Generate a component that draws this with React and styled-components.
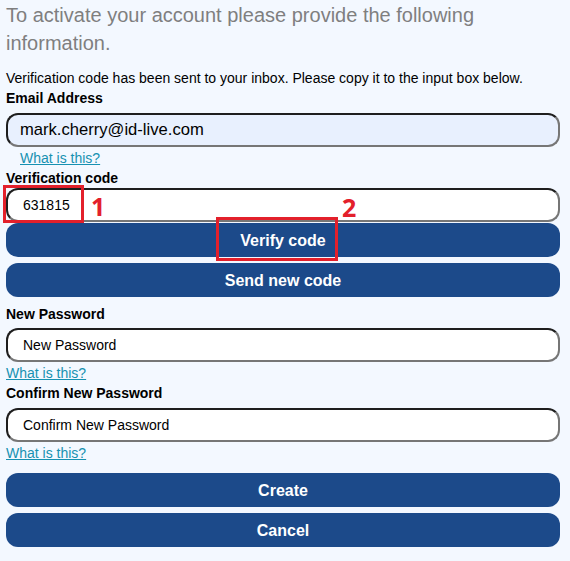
import React from "react";
import styled, { createGlobalStyle } from "styled-components";

const Global = createGlobalStyle`
  html, body { margin: 0; padding: 0; background: #f3f8ff; }
  body { font-family: "Liberation Sans", Arial, sans-serif; }
`;

const Page = styled.div`
  position: relative;
  width: 570px;
  min-height: 561px;
  box-sizing: border-box;
  padding: 1px 10px 0 6px;
  background: #f3f8ff;
`;

const Heading = styled.h1`
  margin: 0;
  font-size: 20px;
  line-height: 28px;
  font-weight: 400;
  color: #7f7f7f;
`;

const Intro = styled.p`
  margin: 11px 0 0;
  font-size: 14px;
  line-height: 20px;
  color: #000;
`;

const Label = styled.label`
  display: block;
  margin-top: ${(p) => p.$mt || 0}px;
  font-size: 14px;
  line-height: 20px;
  font-weight: 700;
  color: #000;
`;

const Input = styled.input`
  display: block;
  box-sizing: border-box;
  width: 100%;
  height: 34px;
  margin: ${(p) => p.$mt || 0}px 0 0;
  padding: 0 0 0 ${(p) => p.$pl || 15}px;
  border: 2px solid;
  border-color: #1e1e1e #767676 #767676 #1e1e1e;
  border-radius: 12px;
  background: ${(p) => (p.$filled ? "#e8f0fe" : "#fff")};
  font-family: "Liberation Sans", Arial, sans-serif;
  font-size: ${(p) => p.$fs || 14}px;
  color: #000;
  outline: none;
  &::placeholder { color: #000; opacity: 1; }
`;

const Help = styled.a`
  display: block;
  width: max-content;
  margin: 1px 0 0 ${(p) => p.$indent || 0}px;
  font-size: 14px;
  line-height: 20px;
  color: #1791b1;
  text-decoration: underline;
  cursor: pointer;
`;

const Button = styled.button`
  display: block;
  box-sizing: border-box;
  width: 100%;
  height: 34px;
  margin-top: ${(p) => p.$mt || 0}px;
  padding: 2px 0 0;
  border: none;
  border-radius: 12px;
  background: #1c4a8a;
  color: #fff;
  font-family: "Liberation Sans", Arial, sans-serif;
  font-size: 16px;
  font-weight: 700;
  cursor: pointer;
`;

const Mark = styled.div`
  position: absolute;
  left: ${(p) => p.$x}px;
  top: ${(p) => p.$y}px;
  width: ${(p) => p.$w}px;
  height: ${(p) => p.$h}px;
  box-sizing: border-box;
  border: 3px solid #e3202b;
  pointer-events: none;
`;

const Num = styled.span`
  position: absolute;
  left: ${(p) => p.$x}px;
  top: ${(p) => p.$y}px;
  font-family: "Open Sans", "Liberation Sans", sans-serif;
  font-size: 25px;
  line-height: 25px;
  font-weight: 700;
  color: #e3202b;
`;

export default function App() {
  return (
    <>
      <Global />
      <Page>
        <Heading>To activate your account please provide the following information.</Heading>
        <Intro>Verification code has been sent to your inbox. Please copy it to the input box below.</Intro>

        <Label>Email Address</Label>
        <Input $mt={5} $filled $fs={16.6} $pl={12} readOnly defaultValue="mark.cherry@id-live.com" />
        <Help $indent={14}>What is this?</Help>

        <Label>Verification code</Label>
        <Input readOnly defaultValue="631815" />
        <Button $mt={1}>Verify code</Button>
        <Button $mt={6}>Send new code</Button>

        <Label $mt={7}>New Password</Label>
        <Input $mt={4} type="text" placeholder="New Password" />
        <Help>What is this?</Help>

        <Label>Confirm New Password</Label>
        <Input $mt={5} type="text" placeholder="Confirm New Password" />
        <Help>What is this?</Help>

        <Button $mt={10}>Create</Button>
        <Button $mt={6}>Cancel</Button>

        <Mark $x={3} $y={185} $w={81} $h={38} />
        <Num $x={91} $y={194}>1</Num>
        <Mark $x={216} $y={217} $w={122} $h={44} />
        <Num $x={342} $y={195}>2</Num>
      </Page>
    </>
  );
}
